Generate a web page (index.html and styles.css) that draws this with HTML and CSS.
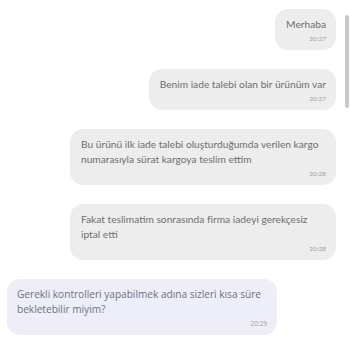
FILE: index.html
```html
<!DOCTYPE html>
<html lang="tr">
<head>
    <meta charset="UTF-8">
    <meta name="viewport" content="width=device-width, initial-scale=1.0">
    <title>Chat</title>
    <link rel="stylesheet" href="styles.css">
</head>
<body>
    <div class="chat">
        <div class="msg sent">
            <p>Merhaba</p>
            <span class="time">20:27</span>
        </div>
        <div class="msg sent">
            <p>Benim iade talebi olan bir ürünüm var</p>
            <span class="time">20:27</span>
        </div>
        <div class="msg sent">
            <p>Bu ürünü ilk iade talebi oluşturduğumda verilen kargo numarasıyla sürat kargoya teslim ettim</p>
            <span class="time">20:28</span>
        </div>
        <div class="msg sent">
            <p>Fakat teslimatim sonrasında firma iadeyi gerekçesiz iptal etti</p>
            <span class="time">20:28</span>
        </div>
        <div class="msg received">
            <p>Gerekli kontrolleri yapabilmek adına sizleri kısa süre bekletebilir miyim?</p>
            <span class="time">20:29</span>
        </div>
    </div>
    <div class="scroll-thumb"></div>
</body>
</html>
```

FILE: styles.css
```css
body {
    margin: 0;
    padding: 0;
    background: #ffffff;
    font-family: 'Lato', sans-serif;
}
.chat {
    display: flex;
    flex-direction: column;
    gap: 19px;
    padding: 9px 14px 0 7px;
}
.msg {
    max-width: 250px;
    padding: 8px 10px 7px 10px;
    border-radius: 13px;
    display: flex;
    flex-direction: column;
}
.msg p {
    margin: 0;
    font-size: 10.2px;
    line-height: 15px;
}
.msg .time {
    align-self: flex-end;
    font-size: 6.5px;
    line-height: 8px;
    margin-top: 3px;
    color: #a0a0a0;
}
.sent {
    align-self: flex-end;
    max-width: 245px;
    padding-left: 11px;
    background: #ededed;
    color: #6d6d6d;
}
.received {
    align-self: flex-start;
    background: #eeeef8;
    color: #6a6f8c;
    font-family: 'Open Sans', sans-serif;
}
.received p {
    font-size: 10.1px;
}
.scroll-thumb {
    position: absolute;
    top: 15px;
    right: 1px;
    width: 4px;
    height: 93px;
    border-radius: 2px;
    background: #c9c9c9;
}
```
